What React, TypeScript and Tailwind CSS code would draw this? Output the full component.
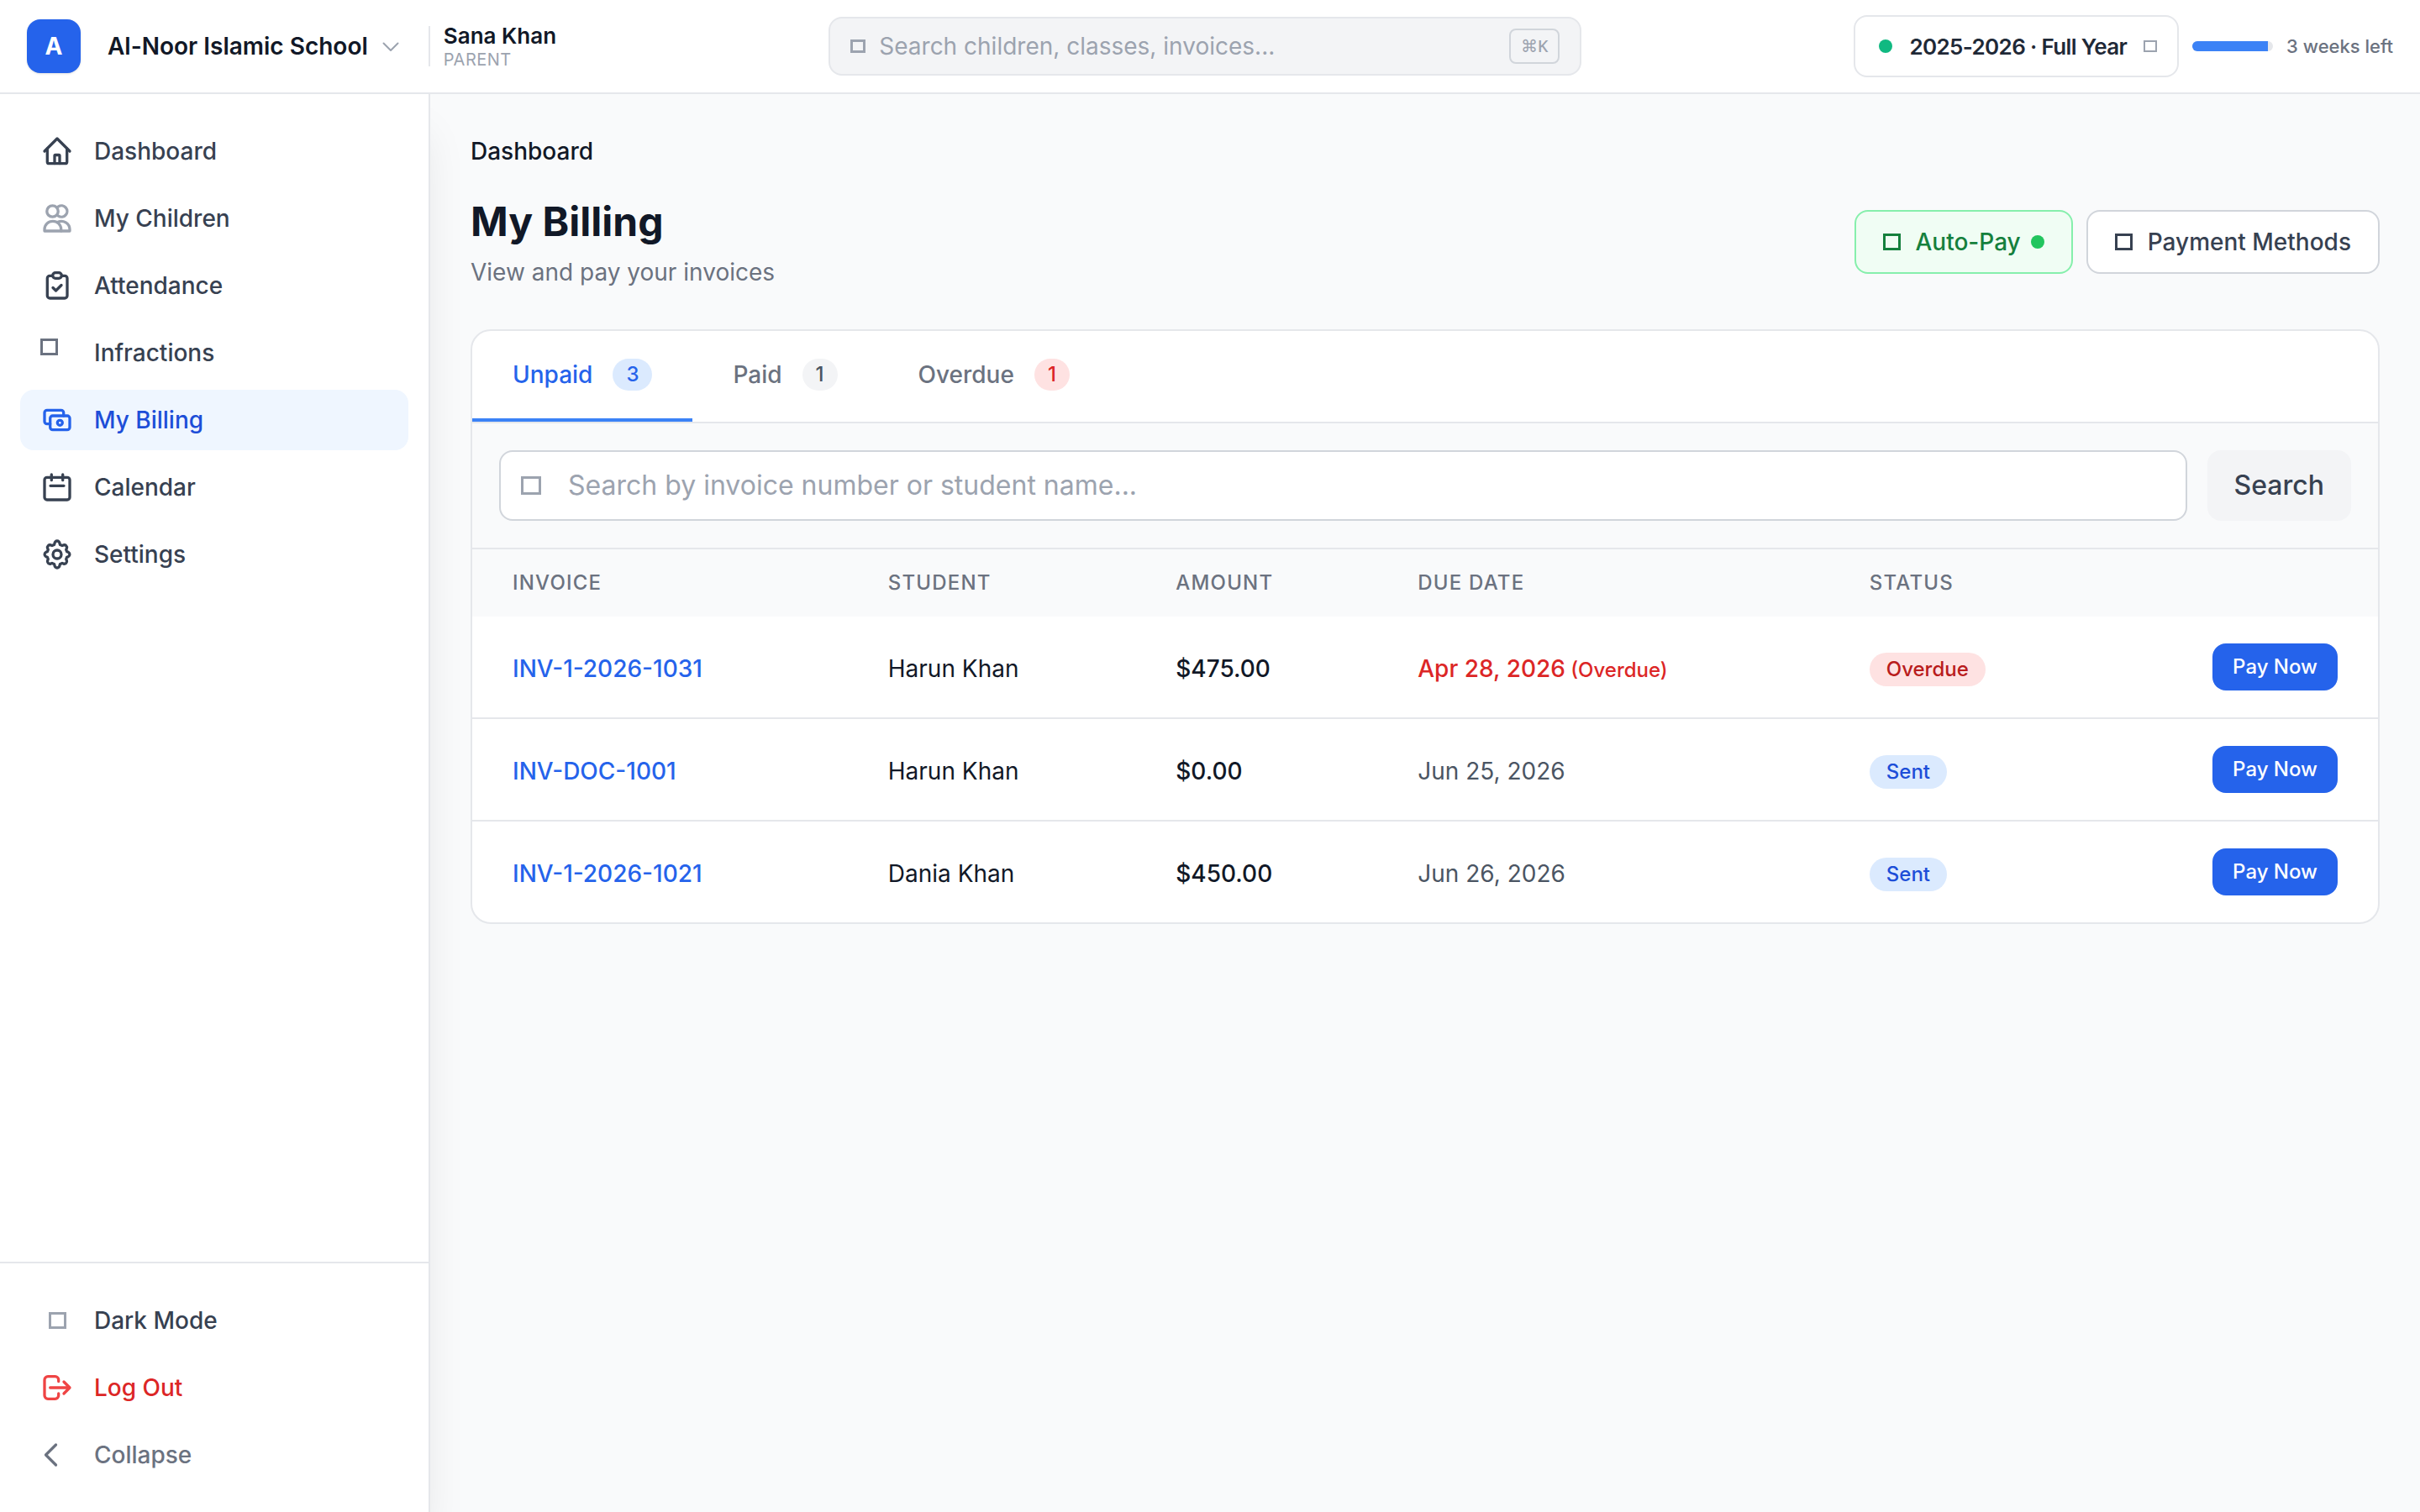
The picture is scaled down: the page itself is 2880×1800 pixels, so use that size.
import React, { useState } from 'react';

interface NavItem {
  label: string;
  icon: React.ReactNode;
}

interface Invoice {
  id: string;
  student: string;
  amount: string;
  due: string;
  overdue: boolean;
  status: string;
}

const invoices: Invoice[] = [
  { id: 'INV-1-2026-1031', student: 'Harun Khan', amount: '$475.00', due: 'Apr 28, 2026', overdue: true, status: 'Overdue' },
  { id: 'INV-DOC-1001', student: 'Harun Khan', amount: '$0.00', due: 'Jun 25, 2026', overdue: false, status: 'Sent' },
  { id: 'INV-1-2026-1021', student: 'Dania Khan', amount: '$450.00', due: 'Jun 26, 2026', overdue: false, status: 'Sent' },
];

const columns = [
  { title: 'INVOICE', width: 'w-[19.7%]' },
  { title: 'STUDENT', width: 'w-[15.1%]' },
  { title: 'AMOUNT', width: 'w-[12.7%]' },
  { title: 'DUE DATE', width: 'w-[23.7%]' },
  { title: 'STATUS', width: '' },
];

const tabs = [
  { name: 'Unpaid', count: 3, badge: 'bg-[#dbeafe] text-[#2563eb]' },
  { name: 'Paid', count: 1, badge: 'bg-[#f3f4f6] text-[#4b5563]' },
  { name: 'Overdue', count: 1, badge: 'bg-[#fee2e2] text-[#dc2626]' },
];

const Icon: React.FC<{ className?: string; children: React.ReactNode }> = ({ className = '', children }) => (
  <svg viewBox="0 0 40 40" fill="none" stroke="currentColor" strokeWidth={3.3} strokeLinecap="round" strokeLinejoin="round" className={`size-10 shrink-0 ${className}`} aria-hidden="true">
    {children}
  </svg>
);

// Hollow square shown where an icon glyph is not available
const Glyph: React.FC<{ className?: string }> = ({ className = '' }) => (
  <span aria-hidden="true" className={`block shrink-0 ${className}`} />
);

const navItems: NavItem[] = [
  {
    label: 'Dashboard',
    icon: (
      <Icon>
        <path d="M5 20 20 5l15 15" />
        <path d="M8.300 17v15.700a2 2 0 0 0 2 2h19.400a2 2 0 0 0 2-2V17" />
        <path d="M17 34.500V25.500a1 1 0 0 1 1-1h4a1 1 0 0 1 1 1v9" />
      </Icon>
    ),
  },
  {
    label: 'My Children',
    icon: (
      <Icon className="text-[#9ca3af]">
        <circle cx="14.500" cy="11.500" r="6.700" />
        <path d="M21.500 5.900a6.700 6.700 0 1 1 0 11.200" />
        <path d="M5 35v-2a9.850 9.700 0 0 1 19.700 0v2z" />
        <path d="M21 24.200a10 10 0 0 1 14 8.800v2H25" />
      </Icon>
    ),
  },
  {
    label: 'Attendance',
    icon: (
      <Icon>
        <path d="M14.500 8.300h-3.200a3 3 0 0 0-3 3V32a3 3 0 0 0 3 3H29a3 3 0 0 0 3-3V11.300a3 3 0 0 0-3-3h-3.500" />
        <rect x="14.700" y="4.700" width="10.600" height="6.600" rx="3.300" />
        <path d="m15 22.500 3.500 3.500 6.500-6.500" />
      </Icon>
    ),
  },
  { label: 'Infractions', icon: <Glyph className="mt-[3px] h-5 w-[21px] border-3 border-[#6b7280]" /> },
  {
    label: 'My Billing',
    icon: (
      <Icon className="text-[#2563eb]">
        <path d="M11.700 24.700H8a3 3 0 0 1-3-3V11.300a3 3 0 0 1 3-3h16.700a3 3 0 0 1 3 3V15" />
        <rect x="11.700" y="15" width="23.300" height="16.700" rx="3" />
        <circle cx="23.300" cy="23.300" r="3" />
      </Icon>
    ),
  },
  {
    label: 'Calendar',
    icon: (
      <Icon>
        <rect x="5" y="8.300" width="30" height="26.700" rx="3" />
        <path d="M13.300 5v6.700M26.700 5v6.700M12 18.300h16" />
      </Icon>
    ),
  },
  {
    label: 'Settings',
    icon: (
      <Icon>
        <circle cx="20" cy="20" r="5" />
        <path d="M17 7a3 3 0 0 1 6 0l.6 1.600 2.400 1 1.600-.7a3 3 0 0 1 3.800 3.800l-.7 1.700 1 2.400 1.700.6a3 3 0 0 1 0 5.200l-1.700.6-1 2.400.7 1.700a3 3 0 0 1-3.800 3.800l-1.600-.7-2.400 1-.6 1.600a3 3 0 0 1-6 0l-.6-1.600-2.400-1-1.600.7a3 3 0 0 1-3.800-3.800l.7-1.700-1-2.400-1.700-.6a3 3 0 0 1 0-5.200l1.700-.6 1-2.400-.7-1.700a3 3 0 0 1 3.800-3.800l1.600.7 2.400-1z" />
      </Icon>
    ),
  },
];

const Header: React.FC = () => (
  <header className="flex h-28 shrink-0 items-center justify-between border-b-2 border-[#e5e7eb] bg-white px-8">
    <div className="flex items-center">
      <div className="flex size-16 items-center justify-center rounded-2xl bg-[#2563eb] text-[28px] font-bold text-white shadow-sm">A</div>
      <button className="ml-8 flex items-center gap-4 text-[28px] leading-10 font-semibold text-[#111827]">
        Al-Noor Islamic School
        <svg viewBox="0 0 24 24" fill="none" stroke="#9ca3af" strokeWidth={2} strokeLinecap="round" strokeLinejoin="round" className="size-6" aria-hidden="true">
          <path d="m2.500 8.500 8.500 8.500 8.500-8.500" />
        </svg>
      </button>
      <div className="ml-8 flex h-12 items-center border-l-2 border-[#e5e7eb] pl-4">
        <div>
          <p className="text-[26px] leading-8 font-semibold text-[#111827]">Sana Khan</p>
          <p className="text-[20px] leading-6 tracking-wide text-[#9ca3af]">PARENT</p>
        </div>
      </div>
    </div>

    <label className="flex h-[70px] w-[896px] items-center rounded-2xl border-2 border-[#e5e7eb] bg-[#f3f4f6] px-6">
      <Glyph className="h-4 w-[18px] border-3 border-[#9ca3af]" />
      <input type="text" aria-label="Search" placeholder="Search children, classes, invoices..." className="ml-4 min-w-0 flex-1 text-[28px] leading-10 outline-none placeholder:text-[#9ca3af]" />
      <kbd className="rounded-lg border-2 border-[#d1d5db] px-3 font-sans text-[20px] leading-[38px] font-medium text-[#9ca3af]">⌘K</kbd>
    </label>

    <div className="flex items-center gap-4">
      <button className="flex h-[74px] items-center rounded-2xl border-2 border-[#e5e7eb] bg-white pr-6 pl-7 text-[26px] font-semibold tracking-tight text-[#1f2937]">
        <span className="mr-5 size-4 rounded-full bg-[#10b981]" />
        2025-2026 · Full Year
        <Glyph className="ml-5 h-[14px] w-4 border-2 border-[#9ca3af]" />
      </button>
      <div className="h-3 w-24 overflow-hidden rounded-full bg-[#e5e7eb]">
        <div className="h-full bg-[#3b82f6]" style={{ width: '94%' }} />
      </div>
      <span className="text-[22px] leading-8 font-medium text-[#6b7280]">3 weeks left</span>
    </div>
  </header>
);

const sideLink = 'flex h-18 w-full items-center gap-6 rounded-2xl px-6 text-[28px] leading-10 font-medium';

const Sidebar: React.FC = () => (
  <aside className="flex w-[512px] shrink-0 flex-col justify-between border-r-2 border-[#e5e7eb] bg-white shadow-[0_40px_50px_-10px_rgba(0,0,0,0.1)]">
    <nav className="flex flex-col gap-2 px-6 py-8">
      {navItems.map(item => (
        <a
          key={item.label}
          href="#"
          className={`${sideLink} ${item.label === 'My Billing' ? 'bg-[#eff6ff] text-[#1d4ed8]' : 'text-[#374151]'}`}
        >
          <span className="flex size-10 shrink-0 items-start">{item.icon}</span>
          {item.label}
        </a>
      ))}
    </nav>
    <div className="flex flex-col gap-2 border-t-2 border-[#e5e7eb] px-6 py-8">
      <button className={`${sideLink} text-[#374151]`}>
        <span className="flex size-10 shrink-0 items-center justify-center">
          <Glyph className="h-5 w-[21px] border-3 border-[#9ca3af]" />
        </span>
        Dark Mode
      </button>
      <button className={`${sideLink} text-[#dc2626]`}>
        <Icon className="text-[#ef4444]">
          <path d="M21.700 12.500v-1.800a4 4 0 0 0-4-4H9a4 4 0 0 0-4 4v18.600a4 4 0 0 0 4 4h8.700a4 4 0 0 0 4-4v-2.300" />
          <path d="M11.700 20H35M28 13l7 7-7 7" />
        </Icon>
        Log Out
      </button>
      <button className={`${sideLink} text-[#6b7280]`}>
        <Icon>
          <path d="M18.500 8 6.500 20l12 12" />
        </Icon>
        Collapse
      </button>
    </div>
  </aside>
);

const InvoiceTable: React.FC = () => (
  <table className="w-full text-left text-[28px] leading-10">
    <thead className="bg-[#f9fafb] text-[24px] leading-8 text-[#6b7280]">
      <tr>
        {columns.map(col => (
          <th key={col.title} className={`px-12 py-6 font-medium tracking-wider ${col.width}`}>{col.title}</th>
        ))}
        <th aria-label="Actions" className="px-12 py-6" />
      </tr>
    </thead>
    <tbody className="divide-y-2 divide-[#e5e7eb]">
      {invoices.map(inv => (
        <tr key={inv.id}>
          <td className="px-12 pt-9 pb-8 font-medium">
            <a href="#" className="text-[#2563eb]">{inv.id}</a>
          </td>
          <td className="px-12 pt-9 pb-8 text-[#111827]">{inv.student}</td>
          <td className="px-12 pt-9 pb-8 font-medium text-[#111827]">{inv.amount}</td>
          <td className={`px-12 pt-9 pb-8 ${inv.overdue ? 'font-medium text-[#dc2626]' : 'text-[#4b5563]'}`}>
            {inv.due}
            {inv.overdue && <span className="text-[24px] leading-8"> (Overdue)</span>}
          </td>
          <td className="px-12 pt-9 pb-8">
            <span className={`inline-flex rounded-full px-5 py-1 text-[24px] leading-8 font-medium ${inv.overdue ? 'bg-[#fee2e2] text-[#b91c1c]' : 'bg-[#dbeafe] text-[#1d4ed8]'}`}>
              {inv.status}
            </span>
          </td>
          <td className="px-12 py-8 text-right">
            <button className="h-14 rounded-2xl bg-[#2563eb] px-6 align-top text-[24px] leading-8 font-medium text-white">Pay Now</button>
          </td>
        </tr>
      ))}
    </tbody>
  </table>
);

const BillingView: React.FC = () => {
  const [activeTab, setActiveTab] = useState('Unpaid');

  return (
    <main className="min-w-0 flex-1 px-12 py-12">
      <nav className="text-[28px] leading-10 font-medium">
        <a href="#" className="text-[#111827]">Dashboard</a>
      </nav>

      <div className="mt-8 flex items-center justify-between">
        <div>
          <h1 className="text-[48px] leading-16 font-bold text-[#111827]">My Billing</h1>
          <p className="mt-2 text-[28px] leading-10 text-[#6b7280]">View and pay your invoices</p>
        </div>
        <div className="flex gap-4 text-[28px] leading-10 font-medium">
          <button className="flex h-[76px] items-center rounded-2xl border-2 border-[#86efac] bg-[#f0fdf4] px-8 text-[#15803d]">
            <Glyph className="mr-[18px] h-5 w-[21px] border-3 border-[#15803d]" />
            Auto-Pay
            <span className="ml-3 size-4 rounded-full bg-[#22c55e]" />
          </button>
          <button className="flex h-[76px] items-center rounded-2xl border-2 border-[#d1d5db] bg-white px-8 text-[#374151]">
            <Glyph className="mr-[18px] h-5 w-[21px] border-3 border-[#374151]" />
            Payment Methods
          </button>
        </div>
      </div>

      <section className="mt-12 overflow-hidden rounded-3xl border-2 border-[#e5e7eb] bg-white">
        <div role="tablist" className="flex border-b-2 border-[#e5e7eb]">
          {tabs.map(tab => (
            <button
              key={tab.name}
              role="tab"
              aria-selected={activeTab === tab.name}
              onClick={() => setActiveTab(tab.name)}
              className={`flex h-27 items-center gap-6 border-b-4 px-12 text-[28px] leading-10 font-medium ${activeTab === tab.name ? 'border-[#3b82f6] text-[#2563eb]' : 'border-transparent text-[#6b7280]'}`}
            >
              {tab.name}
              <span className={`rounded-full px-4 text-[24px] leading-[38px] ${tab.badge}`}>{tab.count}</span>
            </button>
          ))}
        </div>

        <form className="flex gap-6 border-b-2 border-[#e5e7eb] bg-[#f9fafb] p-8" onSubmit={e => e.preventDefault()}>
          <label className="flex h-21 flex-1 items-center rounded-2xl border-2 border-[#d1d5db] bg-white px-6">
            <Glyph className="h-[22px] w-6 border-3 border-[#9ca3af]" />
            <input
              type="text"
              aria-label="Search invoices"
              placeholder="Search by invoice number or student name..."
              className="ml-8 min-w-0 flex-1 text-[32px] leading-12 outline-none placeholder:text-[#9ca3af]"
            />
          </label>
          <button className="rounded-2xl bg-[#f3f4f6] px-8 text-[32px] leading-12 font-medium text-[#374151]">Search</button>
        </form>

        <InvoiceTable />
      </section>
    </main>
  );
};

const App: React.FC = () => (
  <div className="flex min-h-screen flex-col bg-[#f9fafb] font-['Inter',sans-serif]">
    <Header />
    <div className="flex flex-1">
      <Sidebar />
      <BillingView />
    </div>
  </div>
);

export default App;
